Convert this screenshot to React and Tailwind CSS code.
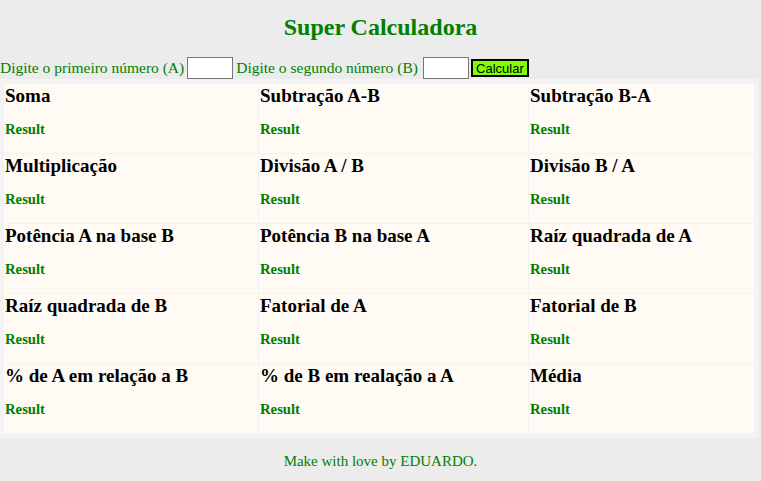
import React, { useState } from 'react';

const operations = [
  ['Soma', 'Subtração A-B', 'Subtração B-A'],
  ['Multiplicação', 'Divisão A / B', 'Divisão B / A'],
  ['Potência A na base B', 'Potência B na base A', 'Raíz quadrada de A'],
  ['Raíz quadrada de B', 'Fatorial de A', 'Fatorial de B'],
  ['% de A em relação a B', '% de B em realação a A', 'Média'],
];

export default function App() {
  const [a, setA] = useState('');
  const [b, setB] = useState('');

  return (
    <div className="min-h-[481px] bg-[#ececec] font-['Liberation_Serif',serif] text-[#008000]">
      <h2 className="pt-[14px] text-center text-[24px] font-bold leading-[normal]">Super Calculadora</h2>

      <div className="mt-[16px] flex h-[22px] items-center text-[15.5px] leading-[normal]">
        <span>Digite o primeiro número (A)</span>
        <input
          value={a}
          onChange={e => setA(e.target.value)}
          className="ml-[3px] h-[22px] w-[46px] border border-[#767676] bg-white px-1 text-[13px] text-black outline-none"
        />
        <span className="ml-[3px]">Digite o segundo número (B)</span>
        <input
          value={b}
          onChange={e => setB(e.target.value)}
          className="ml-[5px] h-[22px] w-[46px] border border-[#767676] bg-white px-1 text-[13px] text-black outline-none"
        />
        <button className="ml-[2px] flex h-[18px] w-[58px] items-center justify-center border-2 border-black bg-[#7fff00] font-['Liberation_Sans',sans-serif] text-[13px] leading-none text-black">
          Calcular
        </button>
      </div>

      <div className="w-[759px] bg-[#f3f3f3] pt-[5px] pb-[5px] pl-[4px]">
        <div className="grid grid-cols-[254px_269px_225px] gap-px">
          {operations.flat().map(title => (
            <div key={title} className="h-[69px] bg-[#fffaf4] px-px pt-px">
              <h3 className="text-[19px] font-bold leading-[normal] text-black">{title}</h3>
              <h4 className="mt-[14px] text-[14.7px] font-bold leading-[normal]">Result</h4>
            </div>
          ))}
        </div>
      </div>

      <footer className="pt-[15px] text-center text-[15px] leading-[normal]">
        Make with love by EDUARDO.
      </footer>
    </div>
  );
}
